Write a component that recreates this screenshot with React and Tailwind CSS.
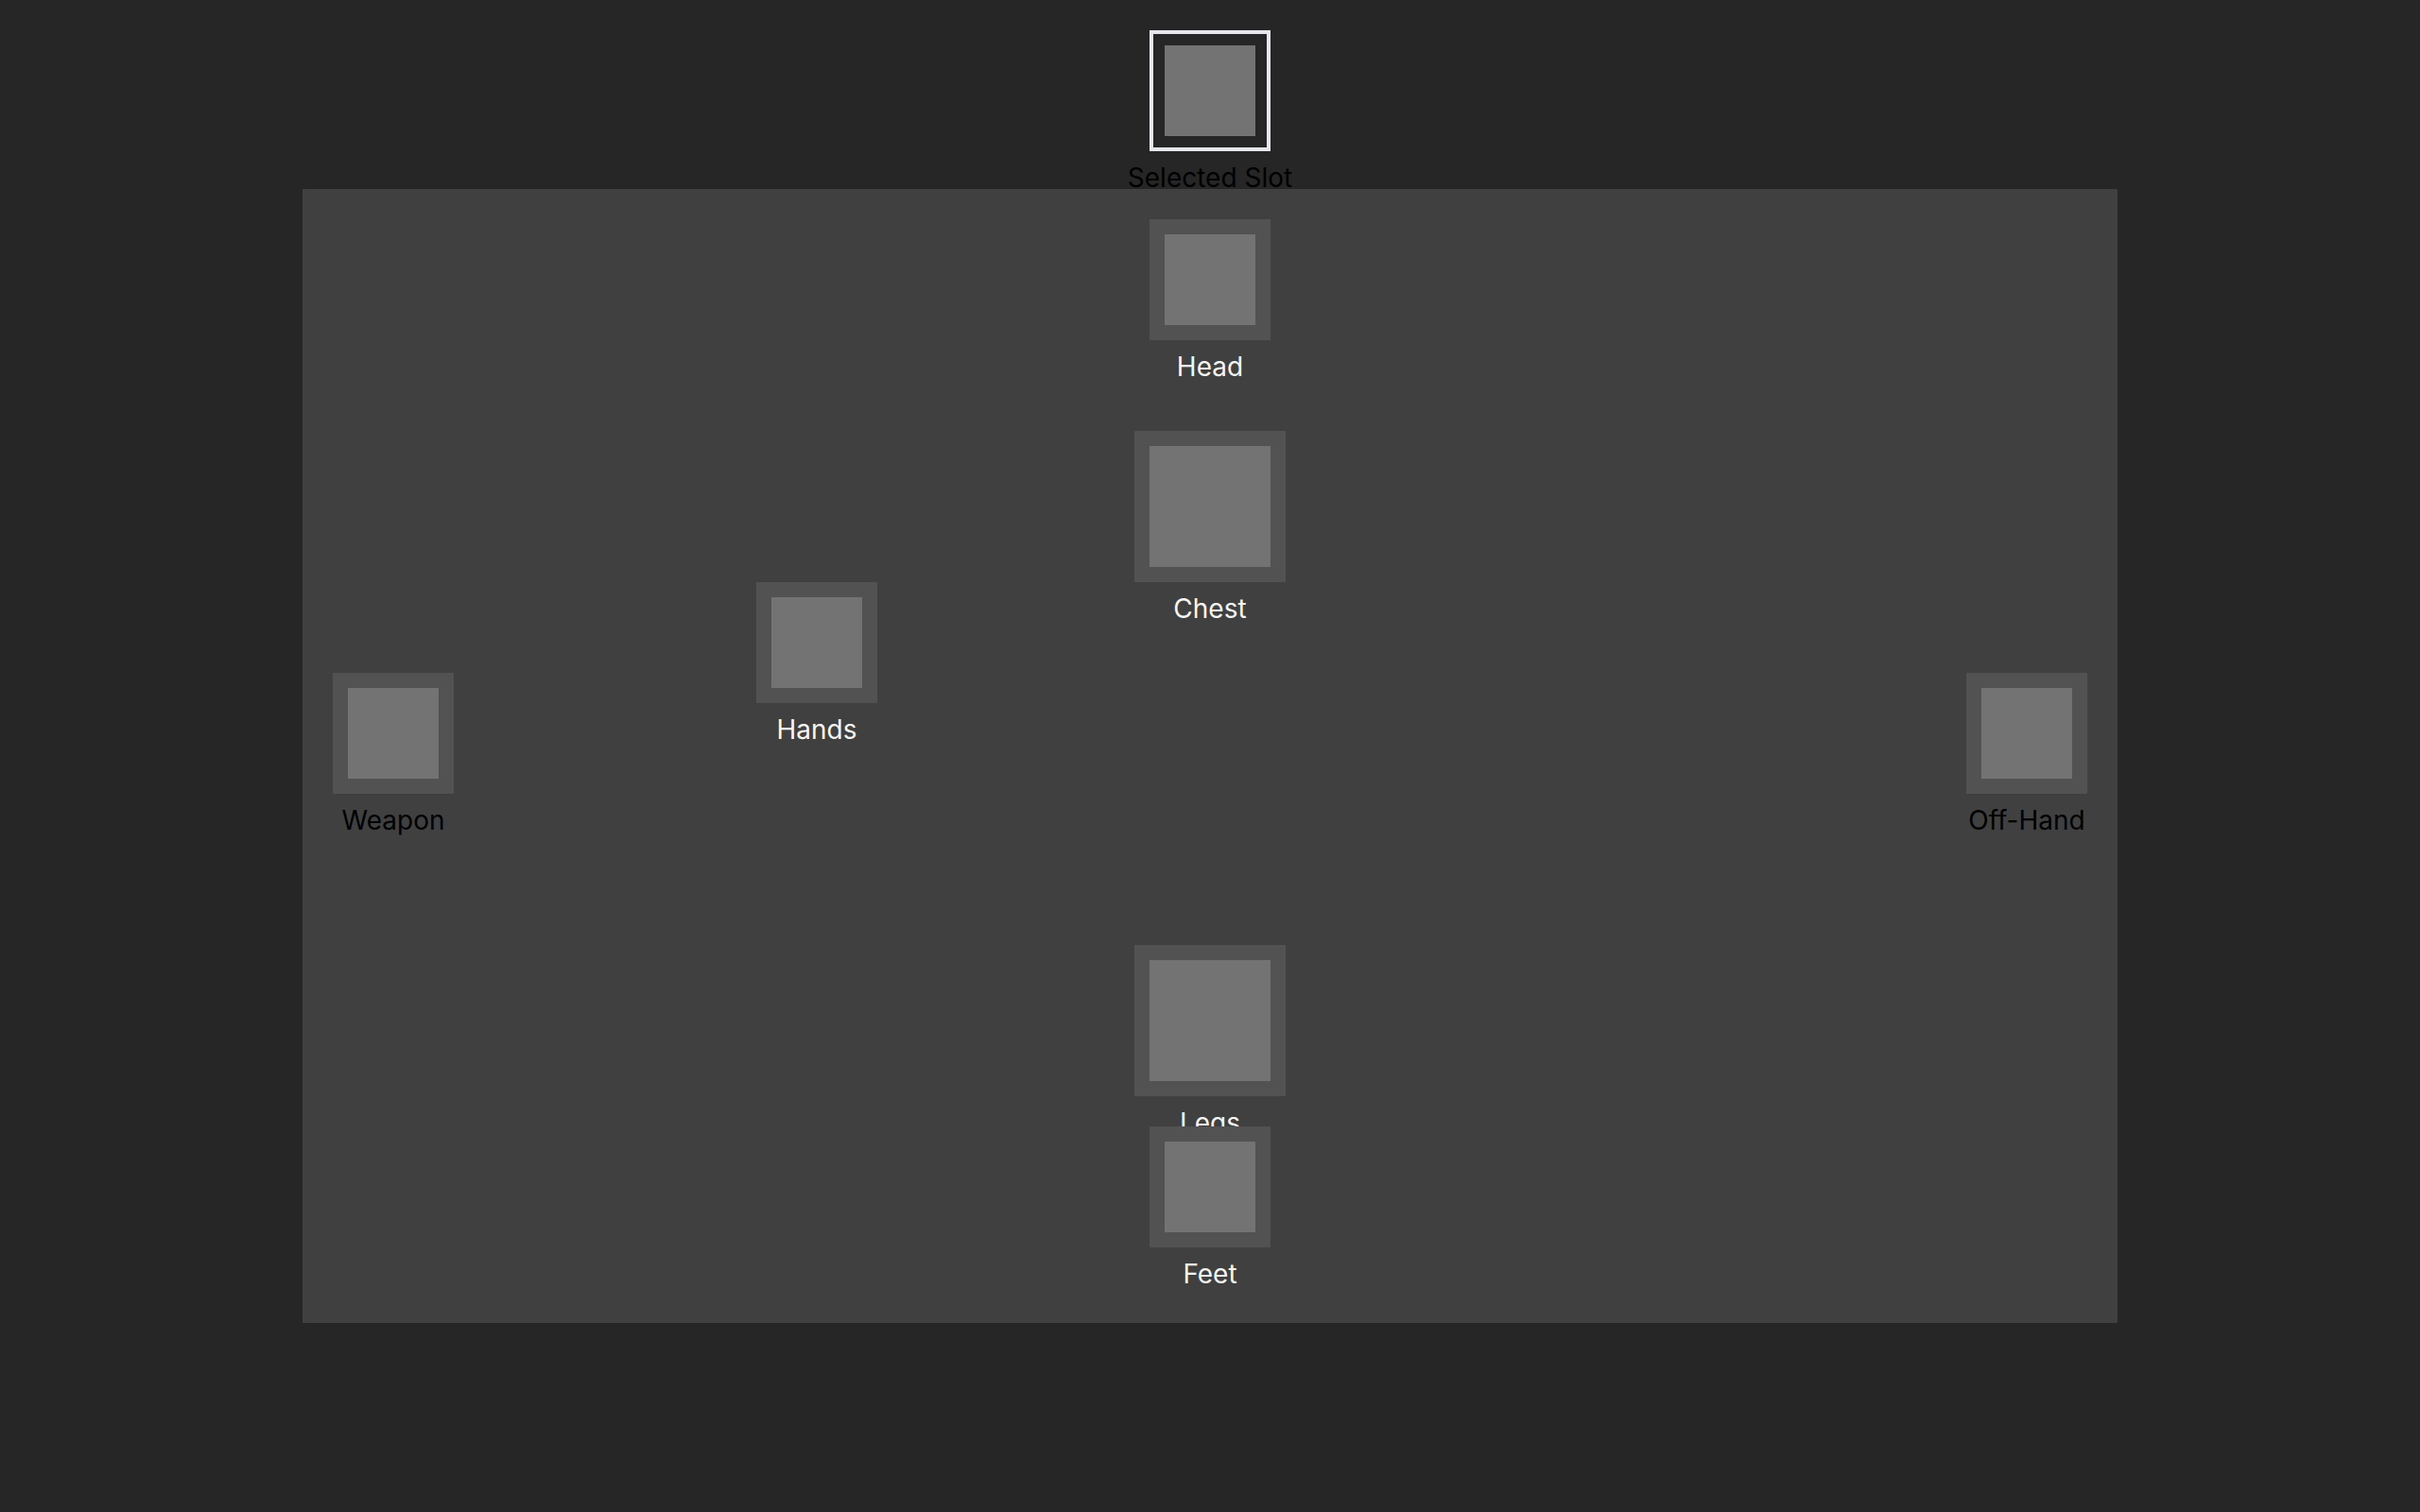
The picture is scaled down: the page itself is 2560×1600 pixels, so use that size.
import React from "react";

const font = { fontFamily: "Inter, 'Noto Sans', sans-serif" };

function SlotBox({ size = "md", selected = false }) {
  if (selected) {
    return (
      <div className="w-[128px] h-[128px] border-4 border-gray-200 p-3 box-border">
        <div className="w-[96px] h-[96px] bg-neutral-500" />
      </div>
    );
  }
  if (size === "lg") {
    return (
      <div className="w-[160px] h-[160px] bg-neutral-600 p-4 box-border">
        <div className="w-[128px] h-[128px] bg-neutral-500" />
      </div>
    );
  }
  return (
    <div className="w-[128px] h-[128px] bg-neutral-600 p-4 box-border">
      <div className="w-[96px] h-[96px] bg-neutral-500" />
    </div>
  );
}

// An equipment slot placed on the paper-doll canvas
function Slot({ label, size, dark, className = "" }) {
  return (
    <div className={`absolute flex flex-col items-center ${className}`}>
      <SlotBox size={size} />
      <span
        className={`mt-[7px] text-[28px] leading-[42px] whitespace-nowrap ${
          dark ? "text-black" : "text-neutral-100"
        }`}
      >
        {label}
      </span>
    </div>
  );
}

export default function App() {
  return (
    <div className="min-h-[1600px] w-full bg-neutral-800 pt-8" style={font}>
      {/* currently selected slot */}
      <div className="h-[168px] flex flex-col items-center">
        <SlotBox selected />
        <span className="mt-[7px] text-[28px] leading-[42px] text-black whitespace-nowrap">
          Selected Slot
        </span>
      </div>

      {/* equipment paper doll */}
      <div className="relative mx-auto w-[1920px] h-[1200px] bg-neutral-700">
        <Slot label="Head" className="left-[896px] top-[32px] w-[128px]" />
        <Slot label="Chest" size="lg" className="left-[880px] top-[256px] w-[160px]" />
        <Slot label="Hands" className="left-[480px] top-[416px] w-[128px]" />
        <Slot label="Weapon" dark className="left-[32px] top-[512px] w-[128px]" />
        <Slot label="Off-Hand" dark className="left-[1760px] top-[512px] w-[128px]" />
        <Slot label="Legs" size="lg" className="left-[880px] top-[800px] w-[160px]" />
        <Slot label="Feet" className="left-[896px] top-[992px] w-[128px]" />
      </div>
    </div>
  );
}
